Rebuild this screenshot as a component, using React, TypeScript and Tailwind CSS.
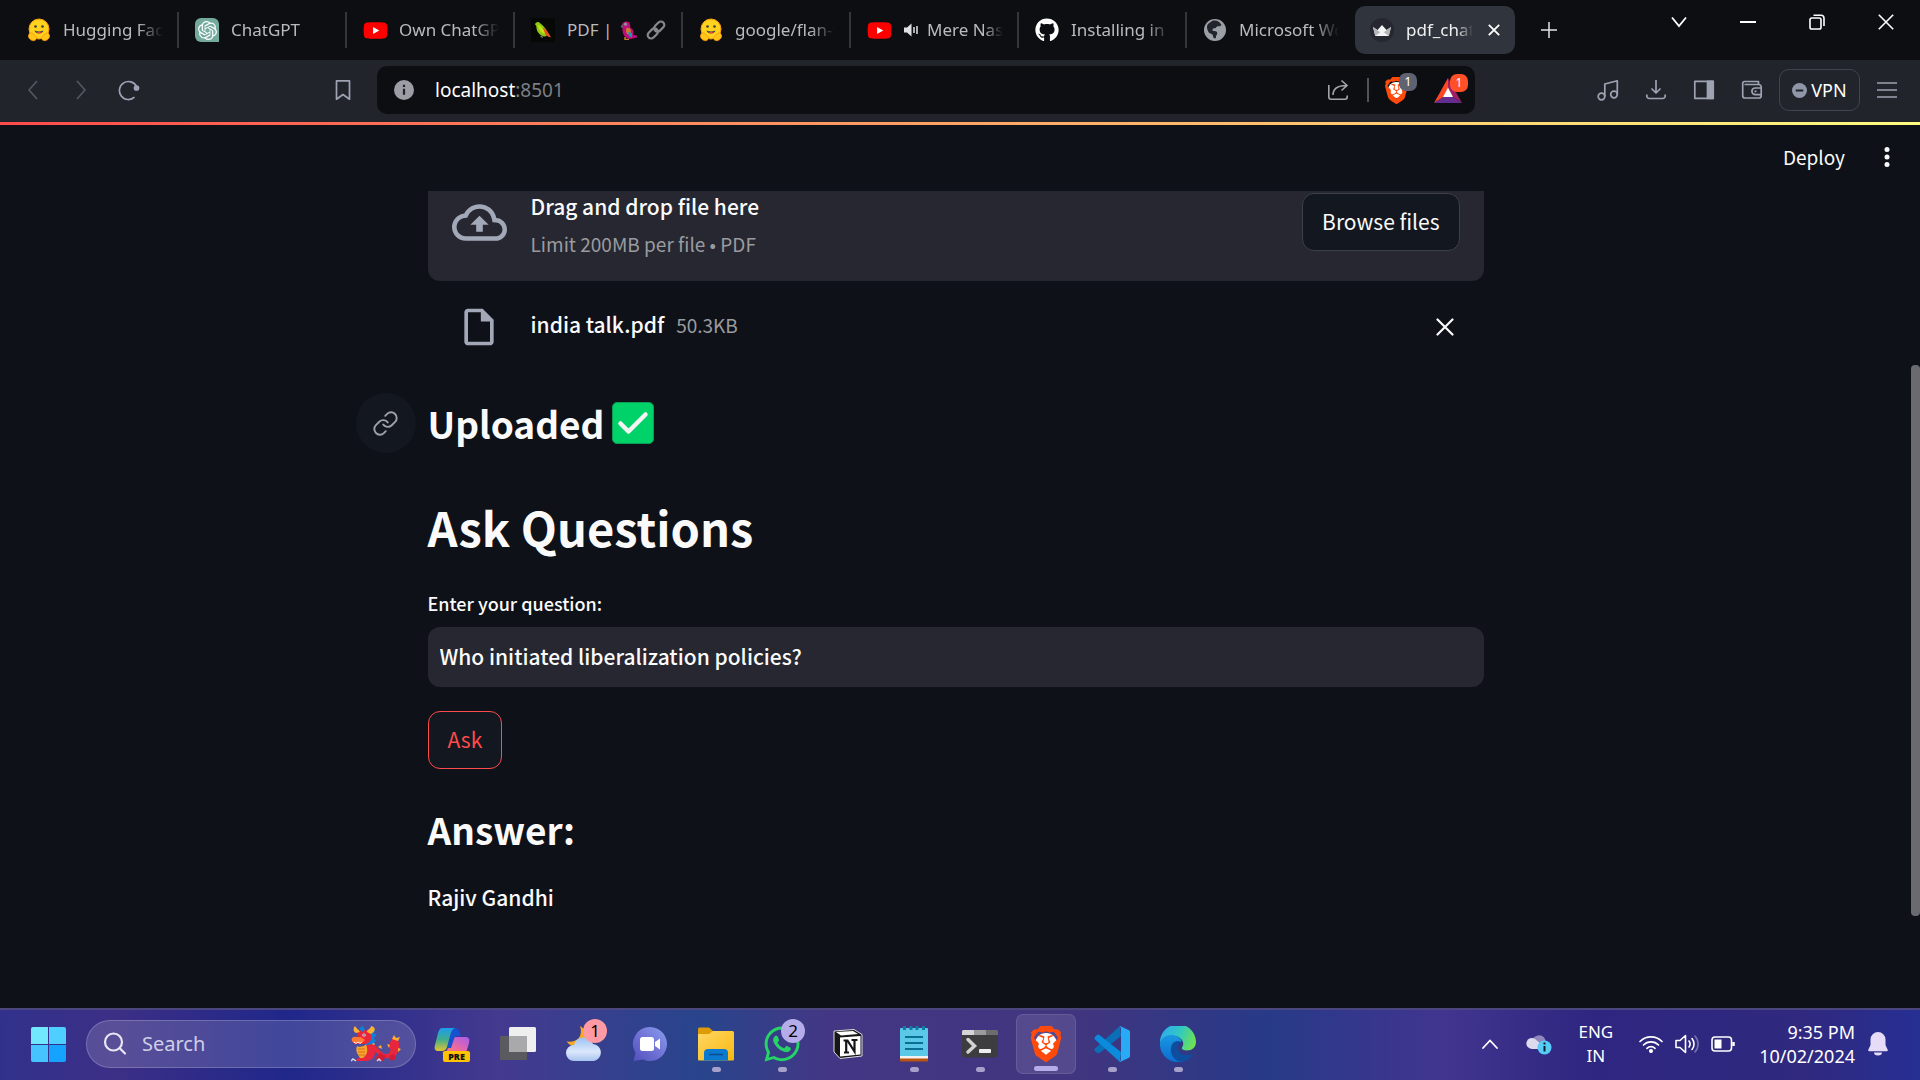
import React, { useState } from 'react';
import { SiOpenai, SiBrave } from 'react-icons/si';
import { FaGithub, FaYoutube, FaWhatsapp } from 'react-icons/fa';
import { MdOutlineCloudUpload, MdOutlineInsertDriveFile } from 'react-icons/md';

const HuggingFace = () => (
  <svg viewBox="0 0 24 24" className="size-6" aria-hidden="true">
    <circle cx="12" cy="11" r="10" fill="#ffd21e" stroke="#ff9d0b" strokeWidth="1" />
    <path d="M7.5 12.5c1 3.800 8 3.800 9 0-3 1.300-6 1.300-9 0z" fill="#3a3b45" />
    <path d="M9.500 14.700c1.500-1 3.500-1 5 0-1.200 1.300-3.800 1.300-5 0z" fill="#f5533d" />
    <circle cx="8.500" cy="8.500" r="1.300" fill="#3a3b45" />
    <circle cx="15.500" cy="8.500" r="1.300" fill="#3a3b45" />
    <path d="M1.500 18c0-2 2-4 3.500-3l3 2.500c2 1.500 2 4-.5 5C5 23.300 1.500 21 1.500 18zM22.500 18c0-2-2-4-3.500-3l-3 2.500c-2 1.500-2 4 .5 5 2.500.8 6-1.500 6-4.500z" fill="#ffc51a" stroke="#ff9d0b" strokeWidth=".8" />
  </svg>
);

const ChatGpt = () => (
  <span className="flex size-6 items-center justify-center rounded-tl-md rounded-bl-md rounded-tr-md bg-[#74aa9c] text-white">
    <SiOpenai size={19} />
  </span>
);

const YouTube = () => (
  <span className="relative flex size-6 items-center justify-center">
    <span className="absolute size-3 bg-white" />
    <FaYoutube size={25} className="relative shrink-0 text-[#ff0000]" />
  </span>
);

const GreenParrot = () => (
  <svg viewBox="0 0 24 24" className="size-6" aria-hidden="true">
    <rect width="24" height="24" fill="#050805" />
    <path d="M4 6.500C4.500 3.500 8 3 9.500 5.500c3 2.500 6.500 6 7 9.500.2 2-1 3.500-3 3.500-4-.5-7.500-4-8-8.500C5.300 8.500 5.500 7.500 4 6.500z" fill="#8ccb12" />
    <path d="M12 9.500c3 1.500 6 5.500 8 10-3-.5-5-2-6.500-4z" fill="#e8501c" />
    <path d="M7 7c3 1 6 4.500 7 9-4-1-6.500-4.500-7-9z" fill="#c9e01a" />
    <path d="M9 18l3 1.500M11 17.500v2" stroke="#8a8d80" strokeWidth=".8" />
  </svg>
);

const RedParrot = () => (
  <svg viewBox="0 0 18 20" className="h-5 w-[18px] shrink-0" aria-hidden="true">
    <path d="M2 5C2 1 9 0 10 4l.5 4c3 1 3 4 2.500 7l4 .5v2L10 19C4 18 2 13 2.500 8z" fill="#c00b7d" />
    <path d="M6.500 8c4-1 5.500 3 3.500 7-3 0-5-3-3.500-7z" fill="#c77b28" />
    <path d="M8 12l4 1v5l-3-2z" fill="#1597b5" />
    <circle cx="5.500" cy="4.200" r="1.600" fill="#8d8f96" />
    <path d="M2.500 4L.5 7l2.500 1z" fill="#6a6d74" />
    <path d="M5 17v2.500h4" stroke="#c77b28" strokeWidth="1.500" fill="none" />
  </svg>
);

const ChainEmoji = () => (
  <svg viewBox="0 0 20 20" className="size-5 shrink-0" fill="none" stroke="#86888b" strokeWidth="2.200" aria-hidden="true">
    <rect x="7.500" y="3.200" width="11.500" height="6.800" rx="3.400" transform="rotate(-45 13.200 6.600)" />
    <rect x="1" y="10" width="11.500" height="6.800" rx="3.400" transform="rotate(-45 6.800 13.400)" />
  </svg>
);

const Globe = () => (
  <svg viewBox="0 0 24 24" className="size-6" aria-hidden="true">
    <circle cx="12" cy="12" r="11" fill="#9aa0a6" />
    <path d="M9 3c4-1.500 8 .5 9.500 4-2 2.500-4 0-5 2s-3 .5-4 2.500 3 1 4.500 2.500-1 2.500-1 5-3 1.500-3-1-3.500-2-4.500-4S3 9 5 6z" fill="#22252b" />
    <path d="M14 14c3-1 4 0 5.500.5C18.500 17 17 18.500 15 19.500c0-2 .5-3-1-5.500z" fill="#9aa0a6" />
  </svg>
);

const Crown = () => (
  <span className="flex size-6 items-center justify-center rounded-full bg-[#262730]">
    <svg viewBox="0 0 20 12" className="h-[11px] w-[18px]" aria-hidden="true">
      <path d="M0 2l5 3.500L10 0l5 5.500L20 2l-2.500 10h-15z" fill="#f4f4f4" />
      <path d="M0 2l8 6-5.500 4zM20 2l-8 6 5.500 4z" fill="#b5b5b8" />
    </svg>
  </span>
);

const Speaker = () => (
  <svg viewBox="0 0 16 16" className="size-4" aria-hidden="true">
    <path d="M1 5.500h3L8.500 1.500v13L4 10.500H1z" fill="#dfe1e5" />
    <path d="M11 5v6M14 4v8" stroke="#dfe1e5" strokeWidth="1.500" />
  </svg>
);

type Tab = { icon: React.ReactNode; title: string; media?: React.ReactNode; tail?: React.ReactNode };

const tabs: Tab[] = [
  { icon: <HuggingFace />, title: 'Hugging Fac' },
  { icon: <ChatGpt />, title: 'ChatGPT' },
  { icon: <YouTube />, title: 'Own ChatGP' },
  { icon: <GreenParrot />, title: 'PDF |', tail: <><RedParrot /><ChainEmoji /></> },
  { icon: <HuggingFace />, title: 'google/flan-t' },
  { icon: <YouTube />, title: 'Mere Nas', media: <Speaker /> },
  { icon: <FaGithub size={24} className="text-white" />, title: 'Installing in a' },
  { icon: <Globe />, title: 'Microsoft Wo' },
];

const fade = 'min-w-0 flex-1 overflow-hidden whitespace-nowrap [mask-image:linear-gradient(to_right,black_75%,transparent)]';

function TabStrip() {
  return (
    <header className="flex h-[60px] shrink-0 items-center bg-[#0d0e12] pl-[11px] text-[17px] leading-6 text-[#b9bbbe]">
      {tabs.map((t, i) => (
        <React.Fragment key={i}>
          <button className="flex h-12 w-40 items-center gap-3 pr-2 pl-4 text-left">
            <span className="shrink-0">{t.icon}</span>
            {t.media && <span className="-mr-1 shrink-0">{t.media}</span>}
            {t.tail ? (
              <span className="flex items-center gap-2 whitespace-nowrap">{t.title}{t.tail}</span>
            ) : (
              <span className={fade}>{t.title}</span>
            )}
          </button>
          {i < tabs.length - 1 ? <span className="ml-1.5 h-9 w-0.5 bg-[#33363b]" /> : <span className="w-2" />}
        </React.Fragment>
      ))}
      <div className="flex h-12 w-40 items-center gap-3 rounded-[10px] bg-[#30343d] pr-3 pl-[15px] text-[#f0f0f2]">
        <Crown />
        <span className={fade}>pdf_chat</span>
        <button aria-label="Close tab" className="flex size-[18px] items-center justify-center">
          <svg viewBox="0 0 12 12" className="size-3" stroke="#fff" strokeWidth="1.800"><path d="M.8.800l10.400 10.400M11.200.800L.8 11.200" /></svg>
        </button>
      </div>
      <button aria-label="New tab" className="flex h-12 w-17 items-center justify-center">
        <svg viewBox="0 0 16 16" className="size-4" stroke="#e4e5e8" strokeWidth="1.500"><path d="M8 0v16M0 8h16" /></svg>
      </button>
      <div className="ml-auto flex h-[43px] self-start text-white">
        <button aria-label="Search tabs" className="flex w-[69px] items-center justify-center">
          <svg viewBox="0 0 16 16" className="size-4" fill="none" stroke="currentColor" strokeWidth="1.800"><path d="M1 3.500l7 8.500 7-8.500" /></svg>
        </button>
        <button aria-label="Minimize" className="flex w-[69px] items-center justify-center"><span className="h-0.5 w-4 bg-white" /></button>
        <button aria-label="Restore" className="flex w-[69px] items-center justify-center">
          <svg viewBox="0 0 16 16" className="size-4" fill="none" stroke="currentColor" strokeWidth="1.600"><rect x="1" y="4" width="11" height="11" rx="1.800" /><path d="M4.500 1.200H12A3 3 0 0 1 15 4.200V12" /></svg>
        </button>
        <button aria-label="Close window" className="flex w-[69px] items-center justify-center">
          <svg viewBox="0 0 16 16" className="size-4" stroke="currentColor" strokeWidth="1.600"><path d="M.8.800l14.400 14.400M15.200.800L.8 15.200" /></svg>
        </button>
      </div>
    </header>
  );
}

const BraveLion = ({ size }: { size: number }) => (
  <span className="relative flex items-center justify-center">
    <span className="absolute h-3/5 w-3/5 rounded-full bg-white" />
    <SiBrave size={size} className="relative text-[#ff4a0c]" />
  </span>
);

function ToolButton({ label, children, dim }: { label: string; children: React.ReactNode; dim?: boolean }) {
  return (
    <button aria-label={label} className={`flex h-12 w-12 items-center justify-center ${dim ? 'text-[#535861]' : 'text-[#9ea3b3]'}`}>
      <svg viewBox="0 0 22 22" className="size-[22px]" fill="none" stroke="currentColor" strokeWidth="1.700" strokeLinejoin="round">{children}</svg>
    </button>
  );
}

function Toolbar() {
  return (
    <nav className="flex h-[62px] shrink-0 items-center bg-[#21242b] px-[9px] pb-0.5">
      <ToolButton label="Back" dim><path d="M15 2L7 11l8 9" /></ToolButton>
      <ToolButton label="Forward" dim><path d="M7 2l8 9-8 9" /></ToolButton>
      <ToolButton label="Reload"><path d="M16.500 18.200a9 9 0 1 1 2-10.700" /><circle cx="18.500" cy="9" r="2" fill="currentColor" /></ToolButton>
      <span className="w-[166px]" />
      <ToolButton label="Bookmark"><path d="M4.500 1.800h13v18.400L11 15.500l-6.500 4.700z" /></ToolButton>
      <div className="mr-[109px] ml-2.5 flex h-12 flex-1 items-center rounded-[10px] bg-[#0d0e12] pl-[17px]">
        <svg viewBox="0 0 20 20" className="size-5" aria-hidden="true">
          <circle cx="10" cy="10" r="10" fill="#9b9ea5" />
          <path d="M10 8.800v6M10 4.800v2.200" stroke="#202227" strokeWidth="2.200" />
        </svg>
        <span className="ml-[21px] text-[19px] leading-6 text-white">localhost<span className="text-[#7d7f84]">:8501</span></span>
        <button aria-label="Share" className="ml-auto">
          <svg viewBox="0 0 22 22" className="size-[22px]" fill="none" stroke="#a3a5aa" strokeWidth="1.600"><path d="M1.800 6v12a2.200 2.200 0 0 0 2.200 2.200h14a2.200 2.200 0 0 0 2.200-2.200v-1.500M6 16c0-7 5-9.500 13.500-9.500M14.500 1.500l5.500 5-5.500 5" /></svg>
        </button>
        <span className="ml-[18px] h-6 w-0.5 bg-[#505257]" />
        <button aria-label="Shields" className="relative ml-3.5">
          <BraveLion size={27} />
          <span className="absolute -top-1 left-4 flex size-[18px] items-center justify-center rounded-[7px] bg-[#5f6270] text-[12px] leading-3 text-white">1</span>
        </button>
        <button aria-label="Rewards" className="relative mr-[13px] ml-6">
          <svg viewBox="0 0 28 25" className="h-[25px] w-7">
            <path d="M14 0L0 25l9.500-6L14 10z" fill="#ff4724" />
            <path d="M14 0l14 25-9.500-6L14 10z" fill="#9e1f63" />
            <path d="M0 25h28l-9.500-6h-9z" fill="#662d91" />
            <path d="M14 9.500l5 9.500H9z" fill="#fff" />
          </svg>
          <span className="absolute -top-1 left-4 flex size-[18px] items-center justify-center rounded-[7px] bg-[#ff5028] text-[12px] leading-3 text-white">1</span>
        </button>
      </div>
      <ToolButton label="Media"><circle cx="4.500" cy="17.500" r="3.300" /><circle cx="17" cy="15.500" r="3.300" /><path d="M7.800 17.500V5l12.500-3.200v13.700" /></ToolButton>
      <ToolButton label="Downloads"><path d="M11 1v13M6.500 9.500L11 14l4.500-4.500M1.800 15.500V17A2.500 2.500 0 0 0 4.300 19.500h13.400a2.500 2.500 0 0 0 2.500-2.500v-1.500" /></ToolButton>
      <ToolButton label="Sidebar"><rect x="1.800" y="2.300" width="18.400" height="17" /><rect x="14.500" y="2.300" width="5.700" height="17" fill="currentColor" /></ToolButton>
      <ToolButton label="Wallet"><path d="M17.500 5.500V2.500H3.500a1.800 1.800 0 0 0-1.800 1.800v12.400A2.300 2.300 0 0 0 4 19h14a2.300 2.300 0 0 0 2.200-2.300V8A2.500 2.500 0 0 0 17.700 5.500H3.500M20.200 9h-6a3.300 3.300 0 0 0 0 6.600h6M13.500 12.300h2" /></ToolButton>
      <button className="mx-[3px] flex h-[42px] w-[81px] items-center justify-center gap-1 rounded-[10px] border border-[#40444d] text-[18px] leading-6 text-white">
        <svg viewBox="0 0 16 16" className="size-[15px] shrink-0" aria-hidden="true"><circle cx="8" cy="8" r="8" fill="#9195a8" /><path d="M4 8h8" stroke="#21242b" strokeWidth="2.200" /></svg>
        VPN
      </button>
      <ToolButton label="Menu"><path d="M1 4h20M1 11h20M1 18h20" /></ToolButton>
    </nav>
  );
}

function StreamlitApp() {
  const [question, setQuestion] = useState('Who initiated liberalization policies?');
  return (
    <div className="flex min-h-0 flex-1 bg-[#0e1117] font-['Noto_Sans_CJK_JP','Noto_Sans_CJK_SC',sans-serif] text-[#fafafa]">
      <div className="flex min-w-0 flex-1 flex-col">
        <div className="flex h-[66px] shrink-0 items-center justify-end pr-[15px] pb-0.5">
          <button className="text-[19px] leading-7">Deploy</button>
          <button aria-label="Main menu" className="ml-[33px] flex h-9 w-[18px] items-center justify-center">
            <svg viewBox="0 0 6 20" className="h-5 w-1.5" fill="#fafafa"><circle cx="3" cy="2.500" r="2.500" /><circle cx="3" cy="10" r="2.500" /><circle cx="3" cy="17.500" r="2.500" /></svg>
          </button>
        </div>
        <main className="min-h-0 flex-1 overflow-hidden">
          <div className="mx-auto w-full max-w-[1056px]">
            <section className="flex items-center gap-6 rounded-b-[12px] bg-[#262730] px-6 pt-0.5 pb-[30px]">
              <MdOutlineCloudUpload size={55} className="shrink-0 text-[#a3a8b8]" />
              <div className="min-w-0 flex-1">
                <p className="-mt-2 text-[21px] leading-9 font-medium">Drag and drop file here</p>
                <p className="-mb-4 text-[19px] leading-10 text-[#9a9b9f]">Limit 200MB per file • PDF</p>
              </div>
              <button className="h-[58px] rounded-[12px] border border-[#3d4048] bg-[#131720] px-[19px] pb-0.5 text-[21px] leading-9">Browse files</button>
            </section>
            <div className="mt-6 flex h-11 items-center px-6">
              <span className="mr-6 flex w-[55px] shrink-0 justify-center"><MdOutlineInsertDriveFile size={44} className="text-[#a3a8b8]" /></span>
              <span className="flex items-baseline gap-3 pb-1.5">
                <span className="text-[21px] leading-9 font-medium">india talk.pdf</span>
                <span className="text-[19px] leading-9 text-[#9a9b9f]">50.3KB</span>
              </span>
              <button aria-label="Remove file" className="mr-1.5 ml-auto">
                <svg viewBox="0 0 18 18" className="size-[18px]" stroke="#fafafa" strokeWidth="2.200" strokeLinecap="round"><path d="M1.500 1.500l15 15M16.500 1.500l-15 15" /></svg>
              </button>
            </div>
            <h3 className="mt-11 -ml-[72px] flex items-center gap-3 text-[37px] leading-[60px] font-bold">
              <a href="#uploaded" aria-label="Link to heading" className="flex size-[60px] items-center justify-center rounded-full bg-[#131720]">
                <svg viewBox="0 0 24 24" className="size-[27px]" fill="none" stroke="#a0a1a5" strokeWidth="1.700" strokeLinecap="round" strokeLinejoin="round"><path d="M10 13a5 5 0 0 0 7.540.54l3-3a5 5 0 0 0-7.070-7.070l-1.720 1.710" /><path d="M14 11a5 5 0 0 0-7.540-.54l-3 3a5 5 0 0 0 7.070 7.070l1.710-1.710" /></svg>
              </a>
              <span className="flex items-center gap-2" id="uploaded">
                Uploaded
                <svg viewBox="0 0 42 42" className="size-[42px]" role="img" aria-label="check mark">
                  <rect x=".5" y=".5" width="41" height="41" rx="4.500" fill="#00d26a" stroke="#0a9c54" />
                  <path d="M8.500 21.500l8 8L33.500 12.500" fill="none" stroke="#f4f4f4" strokeWidth="4.500" strokeLinecap="round" strokeLinejoin="round" />
                </svg>
              </span>
            </h3>
            <h2 className="mt-11 text-[47px] leading-[60px] font-bold">Ask Questions</h2>
            <label htmlFor="question" className="mt-[34px] block text-[18px] leading-6 font-medium">Enter your question:</label>
            <input id="question" value={question} onChange={(e) => setQuestion(e.target.value)} className="mt-3 block h-[60px] w-full rounded-[12px] bg-[#262730] px-3 pb-0.5 text-[21px] leading-9 font-medium outline-none" />
            <button className="mt-6 block h-[58px] rounded-[12px] border border-[#ff4b4b] bg-[#131720] px-[19px] pb-0.5 text-[21px] leading-9 text-[#ff4b4b]">Ask</button>
            <h3 className="mt-9 text-[37px] leading-[48px] font-bold">Answer:</h3>
            <p className="mt-[26px] text-[21px] leading-9 font-medium">Rajiv Gandhi</p>
          </div>
        </main>
      </div>
      <div className="flex w-[9px] flex-col pt-60 pb-[92px]"><div className="flex-1 rounded-[4px] bg-[#696b6f]" /></div>
    </div>
  );
}

const Dragon = () => (
  <svg viewBox="0 0 50 36" className="h-9 w-[50px]" aria-hidden="true">
    <path d="M13 21c5-4 9-4 13 0 4 5 8 9 12 6 3-2 0-6 1-10 1-5 6-7 8-3 3 6 1 17-8 18-7 1-11-4-15-6 0 4-2 8-8 9H5c0-3 4-3 5-5z" fill="#e8263d" />
    <path d="M41 13l2-4 2 3 4-1-2 4M39 19l-3-1 2 4M47 22l3 1-3 3M20 18l2-3 2 4M27 21l3-2 1 4" fill="#ffb02e" />
    <path d="M25 31l4-4 6 3-3 5h-6zM38 30l5-2 2 5-5 2z" fill="#d21c36" />
    <path d="M6 20c3 2 8 0 9-2 2 6 2 10-3 14H9c-2-4-5-6-3-12z" fill="#f9a52b" />
    <path d="M7 23h7M7 26h7M8 29h6" stroke="#d3731a" />
    <path d="M19 6l5-2-1 4h3l-3 4 2 3-4 3-7 1z" fill="#0b84d8" />
    <path d="M6 6c4-3 10-3 13 1 3 5 1 9-4 11H5c-3 0-4-2-3-4 3 0 6-2 4-8z" fill="#e8263d" />
    <path d="M1 12c3-3 6 0 9-1l4 3-3 3H3c-2-1-3-3-2-5z" fill="#ff7a32" />
    <path d="M5 7C1 5 3 1 4 0c1 2 3 3 5 6zM16 6c-1-2 4-3 4-6 4 1 6 4 0 8z" fill="#ffb02e" />
    <path d="M8 3l3-3 3 3-2 3z" fill="#0b84d8" />
    <circle cx="13" cy="9" r="1.600" fill="#fff" /><circle cx="13" cy="9" r=".8" fill="#222" />
    <path d="M3 16l2 1.500L7 16l2 1.500 2-1.500" fill="none" stroke="#fff" />
    <path d="M0 35l2-2 3 2M26 35l2-2 2 2" fill="none" stroke="#cfd8e8" strokeWidth="1.500" />
  </svg>
);

const Copilot = () => (
  <svg viewBox="0 0 36 36" className="size-9" aria-hidden="true">
    <defs>
      <linearGradient id="cpA" x1="0" y1="0" x2="0" y2="1"><stop offset="0" stopColor="#1d9bf0" /><stop offset=".5" stopColor="#3fae8e" /><stop offset="1" stopColor="#e3c52c" /></linearGradient>
      <linearGradient id="cpB" x1="1" y1="0" x2="0" y2="1"><stop offset="0" stopColor="#a35cf0" /><stop offset=".6" stopColor="#ef6a9c" /><stop offset="1" stopColor="#fb8a5a" /></linearGradient>
    </defs>
    <path d="M14 2h7c3 0 4 2 5 5l1 3h-5l-5 12H8z" fill="#1652cf" />
    <path d="M8 2h13c-3 1-4 4-5 8l-3 11c-1 3-3 4-5 4H5c-4 0-5-2-4-6L4 7c1-3 2-5 4-5z" fill="url(#cpA)" />
    <path d="M22 11h9c4 0 5 2 4 6l-3 10H8c3-1 5-2 6-5h3l3-9c.5-1.500 1-2 2-2z" fill="url(#cpB)" />
    <rect x="9" y="25" width="27" height="11" rx="2" fill="#ffc400" />
    <text x="22.500" y="33.600" textAnchor="middle" fontSize="9" fontWeight="800" fontFamily="Open Sans, sans-serif" fill="#111">PRE</text>
  </svg>
);

const TaskView = () => (
  <svg viewBox="0 0 36 36" className="size-9" aria-hidden="true">
    <rect x="0" y="10" width="27" height="24" rx="1.500" fill="#5b5b5f" />
    <rect x="9" y="1" width="27" height="25" rx="1.500" fill="#efefef" />
    <path d="M9 10h18v16H10.500A1.500 1.500 0 0 1 9 24.500z" fill="#a9a9ab" />
  </svg>
);

const Weather = () => (
  <svg viewBox="0 0 36 36" className="size-9" aria-hidden="true">
    <defs><linearGradient id="wc" x1="0" y1="0" x2="0" y2="1"><stop offset="0" stopColor="#9cc3f2" /><stop offset=".6" stopColor="#dbe8fb" /><stop offset="1" stopColor="#a7c4ef" /></linearGradient></defs>
    <path d="M14 0c2 6 1 13-6 15-3 1-6 1-7 0 1 4 6 6 11 5 6-1 9-8 7-14-1-3-3-5-5-6z" fill="#f7a823" />
    <path d="M8 35a8 8 0 0 1 0-16 10 10 0 0 1 19-1 8.600 8.600 0 0 1 1 17z" fill="url(#wc)" />
  </svg>
);

const Chat = () => (
  <svg viewBox="0 0 36 36" className="size-9" aria-hidden="true">
    <defs><linearGradient id="ch" x1="1" y1="0" x2="0" y2="1"><stop offset="0" stopColor="#86a0ee" /><stop offset=".45" stopColor="#7577d8" /><stop offset="1" stopColor="#5150bd" /></linearGradient></defs>
    <path d="M18 1a17 17 0 1 1-7 32.500L1.500 35l2-8A17 17 0 0 1 18 1z" fill="url(#ch)" />
    <rect x="8" y="11" width="14" height="14" rx="2.500" fill="#fff" /><path d="M23 16l5-3.500v11L23 20z" fill="#fff" />
  </svg>
);

const Explorer = () => (
  <svg viewBox="0 0 36 36" className="size-9" aria-hidden="true">
    <defs><linearGradient id="fx" x1="0" y1="0" x2="1" y2="1"><stop offset="0" stopColor="#ffd766" /><stop offset="1" stopColor="#f9b80e" /></linearGradient></defs>
    <path d="M0 3a1.500 1.500 0 0 1 1.500-1.500h9.500L15 5v5H0z" fill="#dd9c06" />
    <path d="M0 8h11l4-3h19.500A1.500 1.500 0 0 1 36 6.500v27a1 1 0 0 1-1 1H1a1 1 0 0 1-1-1z" fill="url(#fx)" />
    <path d="M6 34.500V27a4 4 0 0 1 4-4h16a4 4 0 0 1 4 4v7.500z" fill="#0b79cf" />
    <path d="M11 28.500h14" stroke="#0a4d90" strokeWidth="1.600" />
  </svg>
);

const Notion = () => (
  <svg viewBox="0 0 36 36" className="size-9" aria-hidden="true">
    <path d="M4 5l20-1.500 8 5V30L10 32.500 4 26z" fill="#161616" stroke="#ddd" strokeWidth="1" strokeLinejoin="round" />
    <path d="M6 6l17-1 5 3-17 1.500zM10 11.500L30.500 10v18.500L10 30.500z" fill="#fff" />
    <path d="M14 26.500h5M16.200 26V14.500M13.500 14.500h4l7 11V14M21.500 14h6" fill="none" stroke="#161616" strokeWidth="2.200" />
  </svg>
);

const Notepad = () => (
  <svg viewBox="0 0 36 36" className="size-9" aria-hidden="true">
    <path d="M4 31h28v3.500a1 1 0 0 1-1 1H5a1 1 0 0 1-1-1z" fill="#b8540f" /><path d="M4 29h28v3.500H4z" fill="#f2f2f2" />
    <path d="M5 2h26a1 1 0 0 1 1 1v27H4V3a1 1 0 0 1 1-1z" fill="#5cc8e8" />
    <path d="M9 11h18M9 17h18M9 23h18" stroke="#0b6f95" strokeWidth="1.800" />
    <path d="M8.500 0v4M15 0v4M21 0v4M27.500 0v4" stroke="#0f7ba6" strokeWidth="3" />
  </svg>
);

const Terminal = () => (
  <svg viewBox="0 0 36 36" className="size-9" aria-hidden="true">
    <rect x="0" y="4" width="36" height="27.500" rx="2" fill="#3d3d3f" />
    <path d="M0 9V5.500A1.500 1.500 0 0 1 1.500 4H12v5z" fill="#d5d5d5" /><path d="M12 4h12v5H12z" fill="#9b9b9b" /><path d="M24 4h10.500A1.500 1.500 0 0 1 36 5.500V9H24z" fill="#6d6d6d" />
    <path d="M6 13.500l6.500 6.500L6 26" fill="none" stroke="#d2d2d2" strokeWidth="3.500" strokeLinecap="round" /><rect x="17" y="23" width="12" height="4" rx=".8" fill="#eee" />
  </svg>
);

const VsCode = () => (
  <svg viewBox="0 0 36 36" className="size-9" aria-hidden="true">
    <path d="M26 0L1 22.500a1.800 1.800 0 0 0 0 2.500l2 1.900c.7.600 1.700.600 2.400 0L27 10z" fill="#0b6fb8" />
    <path d="M26 36L1 13.500a1.800 1.800 0 0 1 0-2.500l2-1.900c.7-.6 1.700-.6 2.400 0L27 26z" fill="#0a8bdb" />
    <path d="M26 0l9 4.300c.6.300 1 1 1 1.600v24.200c0 .7-.4 1.300-1 1.600L26 36c-1 .2 1-1 1-3V3c0-2-2-3-1-3z" fill="#2aaaf5" />
  </svg>
);

const Edge = () => (
  <svg viewBox="0 0 36 36" className="size-9" aria-hidden="true">
    <defs>
      <linearGradient id="eg" x1="0" y1=".3" x2="1" y2=".6"><stop offset="0" stopColor="#2fa9ee" /><stop offset=".5" stopColor="#31c8c3" /><stop offset="1" stopColor="#6ee34f" /></linearGradient>
      <linearGradient id="eb" x1="0" y1="0" x2="0" y2="1"><stop offset="0" stopColor="#1a98e0" /><stop offset="1" stopColor="#0a6cd2" /></linearGradient>
    </defs>
    <path d="M0 17A18 18 0 0 1 36 15.500c0 6-4 9-9 9-4 0-6-1.500-5-3 3-4 .5-9-5-11C10 8 3 11 0 17z" fill="url(#eg)" />
    <path d="M0 17C2 10 10 7 17 10.500c3 1.500 4.500 3.500 4.500 5.500-6-2-10 2-10 8 0 7 6 12 13 11A18 18 0 0 1 0 17z" fill="url(#eb)" />
    <path d="M13 17c-4 5-3 15 6 18.500 6 .8 11.500-2.500 14.500-8-7 3-14 1.500-15.500-4.500-.5-3 1-6 3-7-3-1.500-6-1-8 1z" fill="#0d4f9e" />
  </svg>
);

type App = { name: string; icon: React.ReactNode; open?: boolean; active?: boolean; badge?: string; badgeClass?: string };

const apps: App[] = [
  { name: 'Copilot', icon: <Copilot /> },
  { name: 'Task view', icon: <TaskView /> },
  { name: 'Weather', icon: <Weather />, badge: '1', badgeClass: 'bg-[#ff99a4]' },
  { name: 'Chat', icon: <Chat /> },
  { name: 'File Explorer', icon: <Explorer />, open: true },
  { name: 'WhatsApp', icon: <FaWhatsapp size={40} className="shrink-0 text-[#25d366]" />, open: true, badge: '2', badgeClass: 'bg-[#b5adea]' },
  { name: 'Notion', icon: <Notion /> },
  { name: 'Notepad', icon: <Notepad />, open: true },
  { name: 'Terminal', icon: <Terminal />, open: true },
  { name: 'Brave', icon: <BraveLion size={36} />, open: true, active: true },
  { name: 'Visual Studio Code', icon: <VsCode />, open: true },
  { name: 'Edge', icon: <Edge />, open: true },
];

function Taskbar() {
  return (
    <footer className="flex h-[72px] shrink-0 items-center border-t-2 border-[#4c467f] bg-[linear-gradient(90deg,#31318c_0%,#3c2f86_6%,#20278a_15%,#443a8f_26%,#28458c_36.500%,#433785_43%,#41357f_56%,#273a88_66%,#41358f_75%,#2e2680_83%,#30297f_94%,#262f93_100%)] pr-8 pb-0.5 text-white">
      <button aria-label="Start" className="ml-[31px] grid size-[35px] grid-cols-2 gap-px">
        <span className="rounded-tl-[2px] bg-[#72e8ff]" /><span className="rounded-tr-[2px] bg-[#4fcfff]" />
        <span className="rounded-bl-[2px] bg-[#46c4ff]" /><span className="rounded-br-[2px] bg-[#16a3ff]" />
      </button>
      <label className="ml-5 flex h-12 w-[330px] items-center rounded-full border border-white/20 bg-white/15 pr-3.5 pl-4">
        <svg viewBox="0 0 24 24" className="size-6 shrink-0" fill="none" stroke="#e8e8f4" strokeWidth="2.200" strokeLinecap="round"><circle cx="10.500" cy="10" r="8.500" /><path d="M17 16.500l5 5" /></svg>
        <input aria-label="Search" placeholder="Search" className="ml-[15px] min-w-0 flex-1 bg-transparent text-[20px] leading-7 outline-none placeholder:text-[#d0cfe6]" />
        <Dragon />
      </label>
      <div className="ml-[3px] flex">
        {apps.map((a) => (
          <button key={a.name} aria-label={a.name} className={`relative mx-[3px] flex size-[60px] items-center justify-center rounded-[7px] ${a.active ? 'border border-white/10 bg-white/10' : ''}`}>
            {a.icon}
            {a.badge && <span className={`absolute top-[5px] right-[7px] flex size-6 items-center justify-center rounded-full text-[17px] leading-6 text-black ${a.badgeClass}`}>{a.badge}</span>}
            {a.open && <span className={`absolute bottom-0.5 h-[5px] rounded-full ${a.active ? 'w-6 bg-[#b5adea]' : 'w-[9px] bg-[#a6a1cb]'}`} />}
          </button>
        ))}
      </div>
      <div className="ml-auto flex items-center text-[17px] leading-6">
        <button aria-label="Show hidden icons"><svg viewBox="0 0 16 10" className="h-2.5 w-4" fill="none" stroke="#fff" strokeWidth="1.800" strokeLinecap="round"><path d="M1 9l7-7.500L15 9" /></svg></button>
        <svg viewBox="0 0 26 22" className="ml-7 h-[22px] w-[26px]" aria-label="OneDrive">
          <path d="M6 8a7 7 0 0 1 13-2l2 8H8z" fill="#8f87bd" /><path d="M6 16a5.500 5.500 0 1 1 3-10l6 5-3 5z" fill="#dcdaec" />
          <circle cx="18.500" cy="14.500" r="7" fill="#56ccf7" /><path d="M18.500 13v5.500M18.500 9.500v2" stroke="#10202c" strokeWidth="2" />
        </svg>
        <button className="ml-[26px] text-center">ENG<br />IN</button>
        <button aria-label="Network, sound, battery" className="ml-[26px] flex items-center gap-3">
          <svg viewBox="0 0 24 18" className="h-[18px] w-6" fill="none" stroke="#fff" strokeWidth="1.700" strokeLinecap="round"><path d="M1 6.500a15.500 15.500 0 0 1 22 0M4.500 10a10.500 10.500 0 0 1 15 0M8 13.300a5.600 5.600 0 0 1 8 0" /><circle cx="12" cy="16" r="1.200" fill="#fff" /></svg>
          <svg viewBox="0 0 24 20" className="h-5 w-6" fill="none" stroke="#fff" strokeWidth="1.600" strokeLinecap="round" strokeLinejoin="round"><path d="M1 6.500h4l5.500-5v17l-5.500-5H1z" /><path d="M14 7a5 5 0 0 1 0 6M17 4.500a8.500 8.500 0 0 1 0 11" /><path d="M20 2a12 12 0 0 1 0 16" opacity=".35" /></svg>
          <svg viewBox="0 0 24 16" className="h-4 w-6" fill="none" stroke="#fff" strokeWidth="1.600"><rect x="1" y="1" width="19.500" height="14" rx="3" /><rect x="3.500" y="3.500" width="7" height="9" fill="#fff" stroke="none" /><path d="M22.500 6v4" strokeWidth="2.500" /></svg>
        </button>
        <button className="ml-6 text-right text-[18px]">9:35 PM<br />10/02/2024</button>
        <button aria-label="Notifications" className="ml-[13px]">
          <svg viewBox="0 0 20 24" className="h-6 w-5" fill="#e6dcf8"><path d="M10 0a7.500 7.500 0 0 1 7.500 7.500v5.500l2.300 5c.2.700-.2 1.200-1 1.200H1.200c-.8 0-1.200-.5-1-1.200l2.300-5V7.500A7.500 7.500 0 0 1 10 0zM6 20.500h8a4 3 0 0 1-8 0z" /></svg>
        </button>
      </div>
    </footer>
  );
}

export default function App() {
  return (
    <div className="flex h-screen flex-col overflow-hidden font-['Noto_Sans','Open_Sans',sans-serif]">
      <TabStrip />
      <Toolbar />
      <div className="h-[3px] shrink-0 bg-[linear-gradient(90deg,#ff4b4b,#fffd80)]" />
      <StreamlitApp />
      <Taskbar />
    </div>
  );
}
